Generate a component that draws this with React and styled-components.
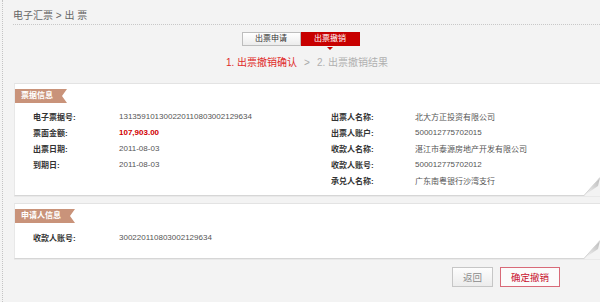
import React from "react";
import styled, { createGlobalStyle } from "styled-components";

const GlobalStyle = createGlobalStyle`
  body {
    margin: 0;
    background: #f3f3f3;
    font-family: "Liberation Sans", "Noto Sans CJK SC", sans-serif;
  }
`;

const billLeft = [
  ["电子票据号:", "131359101300220110803002129634"],
  ["票面金额:", "107,903.00", true],
  ["出票日期:", "2011-08-03"],
  ["到期日:", "2011-08-03"],
];

const billRight = [
  ["出票人名称:", "北大方正投资有限公司"],
  ["出票人账户:", "500012775702015"],
  ["收款人名称:", "湛江市泰源房地产开发有限公司"],
  ["收款人账号:", "500012775702012"],
  ["承兑人名称:", "广东南粤银行沙湾支行"],
];

const Fold = () => (
  <FoldBox>
    <svg width="16" height="19" viewBox="0 0 16 19">
      <defs>
        <linearGradient id="fold" x1="0" y1="1" x2="1" y2="0">
          <stop offset="0" stopColor="#f6f6f6" />
          <stop offset="1" stopColor="#b9b9b9" />
        </linearGradient>
      </defs>
      <polygon points="0,19 16,19 16,0" fill="#f3f3f3" />
      <polygon points="0,18.5 16,0.5 14,9" fill="url(#fold)" />
      <line x1="0" y1="18.5" x2="16" y2="0.5" stroke="#d4d4d4" strokeWidth="1" />
    </svg>
  </FoldBox>
);

const InfoRows = ({ rows, labelWidth, width }) => (
  <InfoColumn $labelWidth={labelWidth} $width={width}>
    {rows.map(([label, value, money]) => (
      <React.Fragment key={label}>
        <Label>{label}</Label>
        <Value $money={money}>{value}</Value>
      </React.Fragment>
    ))}
  </InfoColumn>
);

export default function App() {
  return (
    <>
      <GlobalStyle />
      <Page>
        <Breadcrumb>电子汇票 &gt; 出 票</Breadcrumb>
        <Tabs>
          <Tab>出票申请</Tab>
          <Tab $active>出票撤销</Tab>
        </Tabs>
        <Steps>
          <Step $current>1. 出票撤销确认</Step>
          <StepSep>&gt;</StepSep>
          <Step>2. 出票撤销结果</Step>
        </Steps>

        <Panel>
          <Tag>票据信息</Tag>
          <InfoGrid $gap={5}>
            <InfoRows rows={billLeft} labelWidth={86} width={298} />
            <InfoRows rows={billRight} labelWidth={84} />
          </InfoGrid>
          <Fold />
        </Panel>

        <Panel $space={7} $bottom={13}>
          <Tag>申请人信息</Tag>
          <InfoGrid $gap={6}>
            <InfoRows rows={[["收款人账号:", "300220110803002129634"]]} labelWidth={86} width={298} />
          </InfoGrid>
          <Fold />
        </Panel>

        <Actions>
          <Button>返回</Button>
          <Button $primary>确定撤销</Button>
        </Actions>
      </Page>
    </>
  );
}

const Page = styled.div`
  min-height: 302px;
  box-sizing: border-box;
  margin-left: 2px;
  padding-left: 11px;
  border-left: 1px dotted #c4c4c4;
`;

const Breadcrumb = styled.div`
  margin-left: -1px;
  padding: 10px 0 2px;
  line-height: 12px;
  font-size: 10px;
  color: #666;
  border-bottom: 1px dotted #c8c8c8;
`;

const Tabs = styled.div`
  display: flex;
  justify-content: center;
  margin-top: 7px;
  padding-right: 13px;
`;

const Tab = styled.div`
  position: relative;
  width: 59px;
  height: 14px;
  box-sizing: border-box;
  line-height: 12px;
  text-align: center;
  font-size: 8px;
  border: 1px solid ${(p) => (p.$active ? "#c40000" : "#bdbdbd")};
  background: ${(p) => (p.$active ? "#c80000" : "linear-gradient(#ffffff, #ececec)")};
  color: ${(p) => (p.$active ? "#fff" : "#333")};
  &::after {
    content: "";
    display: ${(p) => (p.$active ? "block" : "none")};
    position: absolute;
    left: 50%;
    bottom: -5px;
    margin-left: -3px;
    border: 3px solid transparent;
    border-top-color: #c80000;
    border-bottom: 0;
  }
`;

const Steps = styled.div`
  display: flex;
  justify-content: center;
  margin-top: 11px;
  line-height: 12px;
  font-size: 10px;
`;

const Step = styled.span`
  color: ${(p) => (p.$current ? "#e02a2a" : "#b0b0b0")};
`;

const StepSep = styled.span`
  margin: 0 7px;
  color: #a8a8a8;
`;

const Panel = styled.div`
  position: relative;
  margin-top: ${(p) => p.$space ?? 14}px;
  padding: 5px 0 ${(p) => p.$bottom ?? 7}px;
  background: #fff;
  border-top: 1px solid #e3e3e3;
  border-left: 1px solid #e8e8e8;
  border-bottom: 1px solid #d6d6d6;
  box-shadow: 0 1px 0 #e9e9e9;
`;

const Tag = styled.div`
  width: max-content;
  height: 14px;
  line-height: 14px;
  padding: 0 14px 0 6px;
  font-size: 8px;
  font-weight: bold;
  color: #fff;
  background: #c9937a;
  clip-path: polygon(0 0, 100% 0, calc(100% - 5px) 50%, 100% 100%, 0 100%);
`;

const InfoGrid = styled.div`
  display: flex;
  margin-top: ${(p) => p.$gap}px;
  padding-left: 18px;
`;

const InfoColumn = styled.div`
  display: grid;
  grid-template-columns: ${(p) => p.$labelWidth}px 1fr;
  grid-auto-rows: 16px;
  align-items: center;
  width: ${(p) => (p.$width ? `${p.$width}px` : "auto")};
  flex: ${(p) => (p.$width ? "none" : "1")};
  font-size: 8px;
`;

const Label = styled.span`
  color: #333;
  font-weight: bold;
`;

const Value = styled.span`
  color: ${(p) => (p.$money ? "#d00000" : "#555")};
  font-weight: ${(p) => (p.$money ? "bold" : "normal")};
`;

const FoldBox = styled.div`
  position: absolute;
  right: 0;
  bottom: -1px;
  width: 16px;
  height: 19px;
  svg {
    display: block;
  }
`;

const Actions = styled.div`
  display: flex;
  justify-content: flex-end;
  gap: 7px;
  margin-top: 8px;
  padding-right: 40px;
`;

const Button = styled.button`
  width: ${(p) => (p.$primary ? 60 : 41)}px;
  height: 20px;
  padding: 0;
  font-family: inherit;
  font-size: 9.5px;
  border: 1px solid ${(p) => (p.$primary ? "#d86a78" : "#c6c6c6")};
  background: ${(p) => (p.$primary ? "#fbfbfb" : "linear-gradient(#fdfdfd, #ececec)")};
  color: ${(p) => (p.$primary ? "#c8102e" : "#8a8a8a")};
`;
